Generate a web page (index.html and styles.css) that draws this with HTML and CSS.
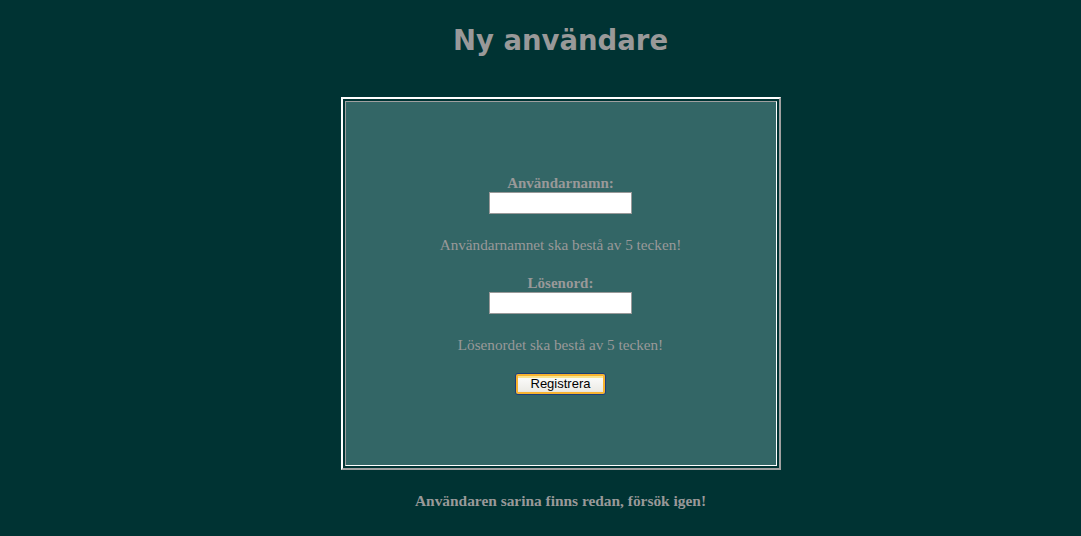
FILE: index.html
```html
<!DOCTYPE html>
<html lang="sv">
<head>
<meta charset="utf-8">
<title>Ny användare</title>
<link rel="stylesheet" href="styles.css">
</head>
<body>
<div class="page">
  <h1 class="title">Ny användare</h1>
  <div class="panel">
    <div class="cell">
      <form class="form">
        <label class="label" for="user">Användarnamn:</label>
        <input class="field" id="user" type="text">
        <p class="hint">Användarnamnet ska bestå av 5 tecken!</p>
        <label class="label" for="pass">Lösenord:</label>
        <input class="field" id="pass" type="password">
        <p class="hint">Lösenordet ska bestå av 5 tecken!</p>
        <button class="btn" type="button">Registrera</button>
      </form>
    </div>
  </div>
  <p class="message">Användaren sarina finns redan, försök igen!</p>
</div>
</body>
</html>
```

FILE: styles.css
```css
html, body {
  margin: 0;
  padding: 0;
  background: #003333;
}
body {
  font-family: "Liberation Serif", "Times New Roman", serif;
  color: #999999;
}
.page {
  display: flex;
  flex-direction: column;
  align-items: center;
  padding: 0 0 0 40px;
}
.title {
  margin: 18px 0 0;
  height: 44px;
  font-family: "Comic Sans MS", "DejaVu Sans", sans-serif;
  font-weight: bold;
  font-size: 27.5px;
  line-height: 44px;
  color: #999999;
}
.panel {
  margin-top: 35px;
  width: 432px;
  height: 365px;
  padding: 2px;
  border: 2px solid;
  border-color: #ffffff #a0a0a0 #a0a0a0 #ffffff;
}
.cell {
  height: 100%;
  box-sizing: border-box;
  border: 1px solid;
  border-color: #a0a0a0 #ffffff #ffffff #a0a0a0;
  background: #336666;
  display: flex;
  align-items: center;
  justify-content: center;
}
.form {
  display: flex;
  flex-direction: column;
  align-items: center;
  margin-top: 2px;
}
.label {
  font-weight: bold;
  font-size: 15px;
  line-height: 17px;
}
.field {
  width: 143px;
  height: 22px;
  box-sizing: border-box;
  margin: 0;
  border: 1px solid #999999;
  background: #ffffff;
}
.hint {
  margin: 22px 0 22px;
  font-size: 15.2px;
  line-height: 17px;
}
.hint:last-of-type {
  margin-bottom: 20px;
}
.btn {
  width: 91px;
  height: 22px;
  padding: 0;
  font-family: "Liberation Sans", Arial, sans-serif;
  font-size: 13px;
  color: #000000;
  border: 1px solid #1c3d7a;
  border-radius: 3px;
  background: linear-gradient(#ffffff, #ecebe6 85%, #d6d0c5);
  box-shadow: inset 0 0 0 2px #f8b330, inset 0 2px 0 2px #fce48d;
}
.message {
  margin: 22px 0 0;
  font-weight: bold;
  font-size: 15.4px;
  line-height: 17px;
}
```
